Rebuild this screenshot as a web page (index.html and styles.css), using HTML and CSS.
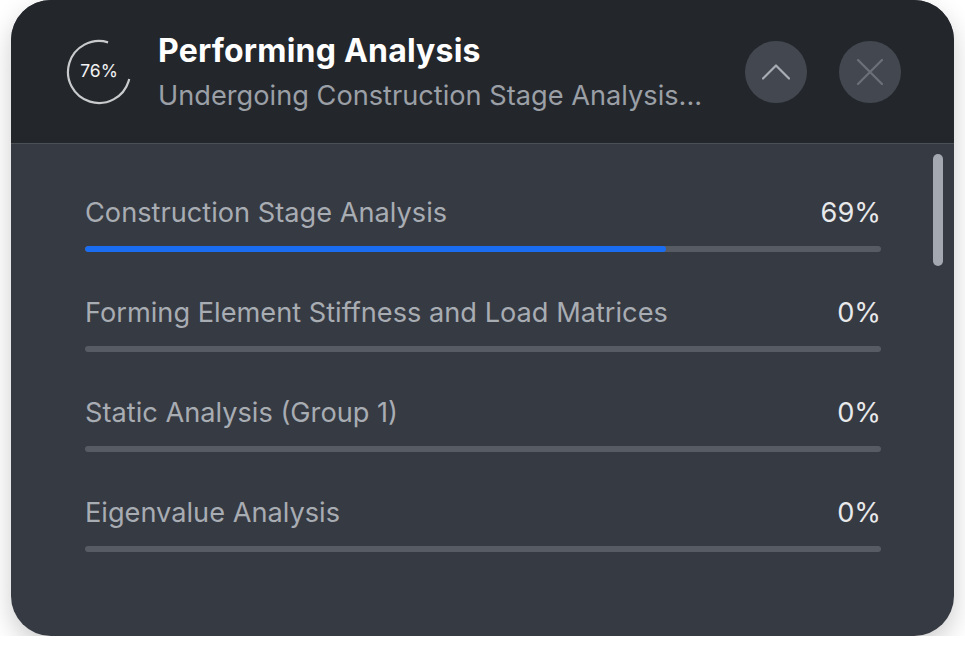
FILE: index.html
```html
<!DOCTYPE html>
<html lang="en">
<head>
<meta charset="utf-8">
<title>Performing Analysis</title>
<link rel="stylesheet" href="styles.css">
</head>
<body>
<div class="card">
  <header class="head">
    <div class="ring">
      <svg width="66" height="66" viewBox="0 0 66 66">
        <circle cx="33" cy="33" r="31" fill="none" stroke="#c9cacc" stroke-width="2.2" stroke-dasharray="148 47" transform="rotate(17 33 33) rotate(-90 33 33) scale(1 -1) translate(0 -66)"/>
      </svg>
      <span class="ring-val">76%</span>
    </div>
    <div class="titles">
      <div class="title">Performing Analysis</div>
      <div class="subtitle">Undergoing Construction Stage Analysis...</div>
    </div>
    <div class="actions">
      <button class="btn" aria-label="Collapse">
        <svg width="28" height="16" viewBox="0 0 28 16"><path d="M1 14.5 L14 1.5 L27 14.5" fill="none" stroke="#a8acb3" stroke-width="2.2" stroke-linecap="round" stroke-linejoin="round"/></svg>
      </button>
      <button class="btn" aria-label="Close">
        <svg width="28" height="26" viewBox="0 0 28 26"><path d="M2 1 L26 25 M26 1 L2 25" fill="none" stroke="#6c7078" stroke-width="2.2" stroke-linecap="round"/></svg>
      </button>
    </div>
  </header>
  <section class="body">
    <div class="row">
      <div class="row-top"><span class="label">Construction Stage Analysis</span><span class="pct">69%</span></div>
      <div class="track"><div class="fill" style="width:73%"></div></div>
    </div>
    <div class="row">
      <div class="row-top"><span class="label">Forming Element Stiffness and Load Matrices</span><span class="pct">0%</span></div>
      <div class="track"></div>
    </div>
    <div class="row">
      <div class="row-top"><span class="label">Static Analysis (Group 1)</span><span class="pct">0%</span></div>
      <div class="track"></div>
    </div>
    <div class="row">
      <div class="row-top"><span class="label">Eigenvalue Analysis</span><span class="pct">0%</span></div>
      <div class="track"></div>
    </div>
    <div class="thumb"></div>
  </section>
</div>
</body>
</html>
```

FILE: styles.css
```css
html, body {
  margin: 0;
  padding: 0;
  background: #ffffff;
}
body {
  font-family: "Inter", "Noto Sans", sans-serif;
}
.card {
  margin-left: 11px;
  width: 943px;
  height: 636px;
  border-radius: 40px;
  overflow: hidden;
  background: #363a42;
  box-shadow: 0 10px 26px rgba(0, 0, 0, 0.2);
  display: flex;
  flex-direction: column;
}
.head {
  height: 143px;
  flex: none;
  background: #23272c;
  border-bottom: 1px solid #4b4f56;
  display: flex;
  align-items: center;
  padding: 0 53px 0 55px;
}
.ring {
  position: relative;
  width: 66px;
  height: 66px;
  flex: none;
}
.ring svg {
  display: block;
}
.ring-val {
  position: absolute;
  inset: 0;
  display: flex;
  align-items: center;
  justify-content: center;
  color: #f2f2f3;
  font-size: 17.5px;
  padding-bottom: 3px;
}
.titles {
  margin-left: 26px;
  flex: 1;
}
.title {
  color: #ffffff;
  font-size: 32px;
  line-height: 38px;
  font-weight: 700;
  letter-spacing: 0.2px;
}
.subtitle {
  color: #9b9fa6;
  font-size: 27.2px;
  line-height: 32px;
  margin-top: 10px;
}
.actions {
  display: flex;
  gap: 32px;
}
.btn {
  width: 62px;
  height: 62px;
  border-radius: 50%;
  border: none;
  padding: 0;
  background: #434850;
  display: flex;
  align-items: center;
  justify-content: center;
}
.btn svg {
  display: block;
}
.body {
  position: relative;
  flex: 1;
  padding: 53px 73px 0 74px;
  display: flex;
  flex-direction: column;
  gap: 45px;
}
.row-top {
  display: flex;
  justify-content: space-between;
  font-size: 27.2px;
  line-height: 32px;
}
.label {
  color: #a8acb3;
}
.pct {
  color: #e8e9eb;
}
.track {
  margin-top: 17px;
  height: 6px;
  border-radius: 3px;
  background: #575c64;
  overflow: hidden;
}
.fill {
  height: 100%;
  border-radius: 3px;
  background: #1a6cf0;
}
.thumb {
  position: absolute;
  right: 11px;
  top: 10px;
  width: 10px;
  height: 112px;
  border-radius: 5px;
  background: #a4a8b0;
}
```
